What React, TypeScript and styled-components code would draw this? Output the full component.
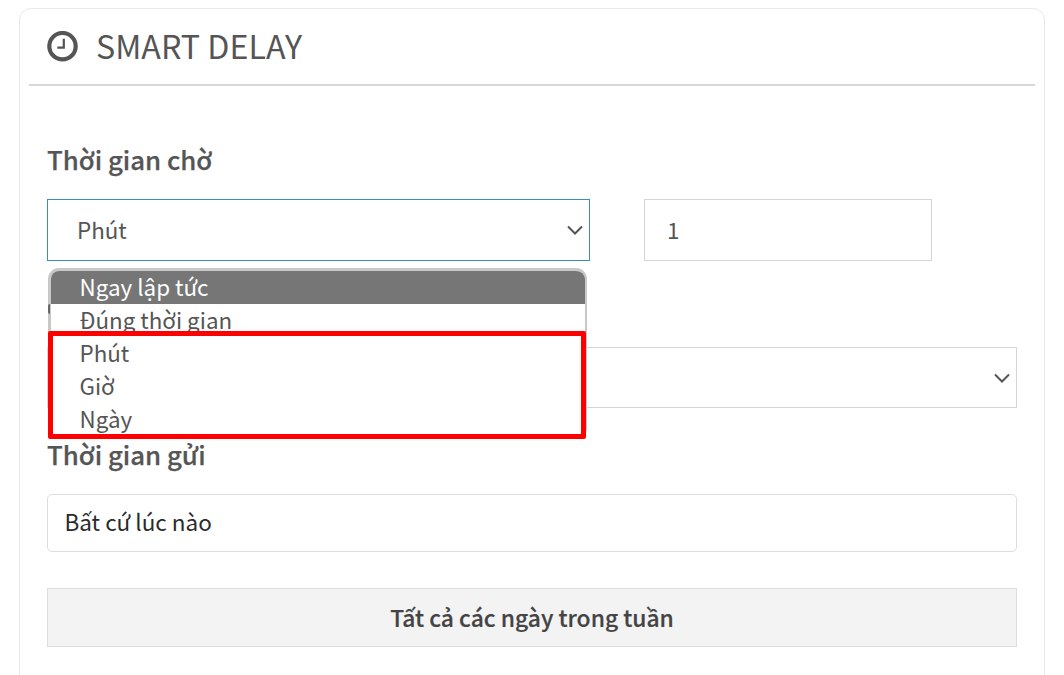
import React, { FC, useState } from 'react';
import styled, { createGlobalStyle } from 'styled-components';

const GlobalStyle = createGlobalStyle`
    * {
        box-sizing: border-box;
    }

    body {
        margin: 0;
        height: 675px;
        overflow: hidden;
        background: #ffffff;
        color: #555555;
        font-family: "Noto Sans CJK SC", "Noto Sans", sans-serif;
        font-size: 22.4px;
    }
`;

const Panel = styled.section`
    width: 1026px;
    height: 690px;
    margin: 8px 0 0 19px;
    padding: 0 9px;
    border: 1px solid #e7e9eb;
    border-radius: 12px;
`;

const PanelHeader = styled.header`
    display: flex;
    align-items: center;
    gap: 18px;
    height: 77px;
    padding: 0 18px;
    border-bottom: 2px solid #d5d7da;

    h1 {
        margin: 0;
        padding-bottom: 4px;
        font-size: 32.2px;
        font-weight: 400;
        line-height: 40px;
    }
`;

const PanelBody = styled.div`
    display: flex;
    flex-direction: column;
    padding: 54px 18px 0;
`;

const Label = styled.div`
    height: 38px;
    margin-bottom: 21px;
    font-size: 25.8px;
    font-weight: 500;
    line-height: 38px;
    white-space: nowrap;
    -webkit-text-stroke: 0.25px #555555;
`;

const DelayRow = styled.div`
    display: flex;
    gap: 54px;
    margin-bottom: 86px;
`;

const SelectWrap = styled.div<{ $width: number }>`
    position: relative;
    width: ${({ $width }) => $width}px;
    margin-bottom: ${({ $width }) => ($width > 600 ? 27 : 0)}px;
`;

const SelectBox = styled.div<{ $height: number; $active?: boolean }>`
    display: flex;
    align-items: center;
    justify-content: space-between;
    height: ${({ $height }) => $height}px;
    padding: 0 5px 0 29px;
    border: 1px solid ${({ $active }) => ($active ? '#3c8dbc' : '#d2d6de')};
    background: #ffffff;

    span {
        padding-bottom: 2px;
    }
`;

const NumberBox = styled.div`
    display: flex;
    align-items: center;
    width: 288px;
    height: 62px;
    padding: 0 22px 2px;
    border: 1px solid #d2d6de;
`;

const Menu = styled.ul`
    position: absolute;
    z-index: 1;
    top: 69px;
    left: 1px;
    width: 539px;
    margin: 0;
    padding: 0;
    overflow: hidden;
    list-style: none;
    border: 3px solid #c8c8c8;
    border-right-width: 2px;
    border-radius: 11px;
    background: #ffffff;
`;

const MenuItem = styled.li<{ $selected: boolean }>`
    height: 33px;
    padding-left: 28.5px;
    line-height: 30px;
    color: ${({ $selected }) => ($selected ? '#ffffff' : '#555555')};
    background: ${({ $selected }) => ($selected ? '#767676' : '#ffffff')};
`;

// edge of the field label that shows through beside the open menu
const CoveredLabel = styled.div`
    position: absolute;
    z-index: 2;
    top: 105px;
    left: 1px;
    width: 2px;
    height: 10px;
    border-radius: 2px 0 0 2px;
    background: #666666;
`;

const Highlight = styled.div`
    position: absolute;
    z-index: 2;
    top: 132px;
    left: 1px;
    width: 538px;
    height: 108px;
    border: 5px solid #ff0000;
    border-radius: 2px;
    pointer-events: none;
`;

const TextBox = styled.div`
    height: 58px;
    margin-bottom: 36px;
    padding-left: 16.5px;
    border: 1px solid #dddddd;
    border-radius: 5px;
    color: #2b2b2b;
    font-size: 22.5px;
    line-height: 52px;
`;

const DaysButton = styled.button`
    height: 59px;
    padding: 0;
    border: 1px solid #dddddd;
    background: #f3f3f3;
    color: #444444;
    font: 500 22.85px/57px "Noto Sans CJK SC", "Noto Sans", sans-serif;
    -webkit-text-stroke: 0.2px #444444;
`;

const ClockIcon = () => (
    <svg width="31" height="31" viewBox="0 0 31 31" fill="none" stroke="#555555">
        <circle cx="15.5" cy="15.2" r="13.2" strokeWidth="4.2" />
        <path d="M16.8 7.8v8.9h-6.5" strokeWidth="2.2" />
    </svg>
);

const Chevron = () => (
    <svg width="18" height="12" viewBox="0 0 18 12" fill="none" stroke="#555555">
        <path d="M2 2.5l7 7 7-7" strokeWidth="2" />
    </svg>
);

const options = ['Ngay lập tức', 'Đúng thời gian', 'Phút', 'Giờ', 'Ngày'];

const App: FC = () => {

    const [hovered, setHovered] = useState(0);

    return (
        <>
            <GlobalStyle />
            <Panel>
                <PanelHeader>
                    <ClockIcon />
                    <h1>SMART DELAY</h1>
                </PanelHeader>
                <PanelBody>
                    <Label>Thời gian chờ</Label>
                    <DelayRow>
                        <SelectWrap $width={543}>
                            <SelectBox $height={62} $active>
                                <span>Phút</span>
                                <Chevron />
                            </SelectBox>
                            <Menu>
                                {options.map((o, i) => (
                                    <MenuItem key={o} $selected={i === hovered} onMouseEnter={() => setHovered(i)}>
                                        {o}
                                    </MenuItem>
                                ))}
                            </Menu>
                            <CoveredLabel />
                            <Highlight />
                        </SelectWrap>
                        <NumberBox>1</NumberBox>
                    </DelayRow>
                    <SelectWrap $width={970}>
                        <SelectBox $height={61}>
                            <span />
                            <Chevron />
                        </SelectBox>
                    </SelectWrap>
                    <Label>Thời gian gửi</Label>
                    <TextBox>Bất cứ lúc nào</TextBox>
                    <DaysButton>Tất cả các ngày trong tuần</DaysButton>
                </PanelBody>
            </Panel>
        </>
    );
};

export default App;
